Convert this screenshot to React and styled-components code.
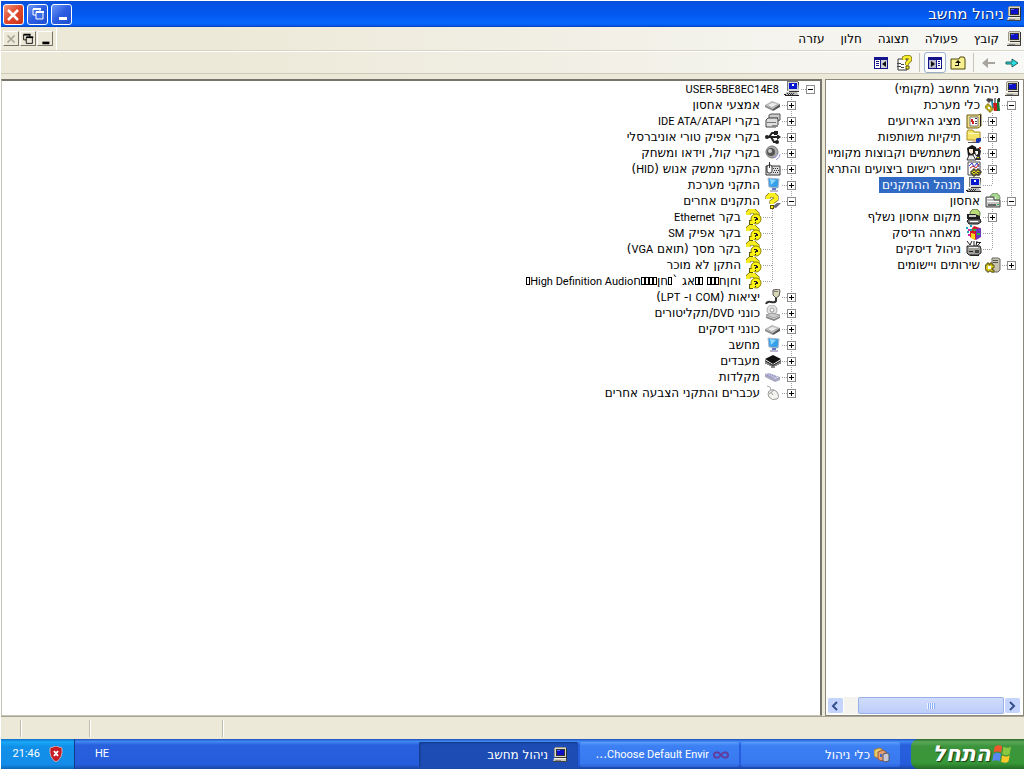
import React from 'react';
import styled, { createGlobalStyle, css } from 'styled-components';

const icons = {
  computer: (
    <>
      <path d="M3 0h11v10H3z" fill="#dcd8c8" />
      <path d="M3 0h11v1H3zM2 1h1v9H2z" fill="#9c9888" />
      <path d="M14 1h1v10H4v-1h10z" fill="#333" />
      <path d="M4 2h9v7H4z" fill="#333" />
      <path d="M5 3h7v5H5z" fill="#0c10c8" />
      <path d="M5 3h3v1H5z" fill="#5868ff" />
      <path d="M2 11h12l1 4H1z" fill="#d0ccbc" />
      <path d="M2 11h12v1H2z" fill="#f4f0e4" />
      <path d="M1 14h14v1H1zM14 11h1v3h-1z" fill="#444" />
      <path d="M3 13h6v1H3z" fill="#888" />
    </>
  ),
  devmgr: (
    <>
      <path d="M4 0h10v10H4z" fill="#d8d8d8" />
      <path d="M4 0h10v1H4zM3 0h1v10H3z" fill="#777" />
      <path d="M14 1h1v9H5v1h10z" fill="#333" />
      <path d="M5 2h8v6H5z" fill="#0818d0" />
      <path d="M8 3h2v2H8z" fill="#fff" />
      <path d="M2 11h11l2 4H1z" fill="#bbb" />
      <path d="M1 14h14v1H1zM0 13h2v1H0z" fill="#222" />
      <path d="M3 12h1v1H3zM5 12h1v1H5zM7 12h1v1H7zM9 12h1v1H9zM4 13h1v1H4zM6 13h1v1H6zM8 13h1v1H8z" fill="#333" />
    </>
  ),
  tools: (
    <>
      <path d="M1 3l2-2 5 1v3L6 4l-2 2z" fill="#444" />
      <path d="M6 4h2l1 7H7z" fill="#1890a8" />
      <path d="M9 1h2v6H9z" fill="#888" />
      <path d="M8 6h4l1 8H9z" fill="#cc1c1c" />
      <path d="M12 2h2l1 12h-3z" fill="#187838" />
      <path d="M13 1h2v4h-2z" fill="#333" />
      <path d="M0 9h2V7h2v2h2v2h2v2H6v2H4v-2H2v-2H0z" fill="#d8c820" stroke="#8a8010" strokeWidth="1" />
      <path d="M3 10h2v2H3z" fill="#fff" />
    </>
  ),
  events: (
    <>
      <path d="M1 2h11l3-1v12l-3 2H1z" fill="#f0e088" stroke="#6a5c10" strokeWidth="1" />
      <path d="M4 4h8v9H4z" fill="#fff" stroke="#777" strokeWidth="1" />
      <path d="M6 6h1v2h1v3H6V9H5V6z" fill="#cc2020" />
      <path d="M9 5h2v1H9zM9 8h2v1H9zM9 10h2v1H9z" fill="#445" />
      <path d="M14 2h1v11h-1z" fill="#222" />
    </>
  ),
  shared: (
    <>
      <path d="M1 3l1-2h5l1 2h6v8H1z" fill="#f4e468" stroke="#a89020" strokeWidth="1" />
      <path d="M2 4h11v1H2z" fill="#fffbc0" />
      <path d="M2 13h9v1H2z" fill="#555" />
      <path d="M11 9h4v3l-2 2h-3v-4z" fill="#1838b0" />
      <path d="M6 12l4-2v3H7z" fill="#e8b890" />
    </>
  ),
  users: (
    <>
      <path d="M1 3l5-3 4 2 1 5-4 3-5 1z" fill="#151515" />
      <path d="M3 4h4v4L5 9 3 7z" fill="#f8ecd8" />
      <path d="M9 4l4-1 2 3-1 5h-4L8 8z" fill="#222" />
      <path d="M9 6h3v3l-2 1z" fill="#fff" />
      <path d="M1 15l2-5h4l3 5z" fill="#e8e8e8" stroke="#333" strokeWidth="1" />
      <path d="M9 15l2-4h3l1 4z" fill="#333" />
      <path d="M11 12h2v1h-2z" fill="#e0d020" />
      <path d="M13 2h2v2h-2z" fill="#c04020" />
    </>
  ),
  perf: (
    <>
      <path d="M2 1h12v13H2z" fill="#fff" stroke="#444" strokeWidth="1" />
      <path d="M3 5l3-3 2 4 3-4 2 4" fill="none" stroke="#2838c8" strokeWidth="1" />
      <path d="M4 7l3-2 3 2 3-4" fill="none" stroke="#c82020" strokeWidth="1" />
      <path d="M5 10h2V8h2v2h2V8h2v2h2v2h-2v2h-2v-1H9v2H7v-2H5z" fill="#e0d020" stroke="#222" strokeWidth="1" />
      <path d="M7 11h2v1H7zM11 11h2v1h-2z" fill="#333" />
    </>
  ),
  storage: (
    <>
      <circle cx="10" cy="5" r="5" fill="#a8d890" stroke="#78906c" />
      <circle cx="10" cy="5" r="1" fill="#fff" />
      <path d="M1 4h8v3h6v7H1z" fill="#c4c4c4" stroke="#444" strokeWidth="1" />
      <path d="M2 5h6v1H2zM2 8h12v1H2z" fill="#fff" />
      <path d="M3 11h8v2H3z" fill="#666" />
      <path d="M12 11h2v1h-2z" fill="#18c030" />
    </>
  ),
  removable: (
    <>
      <circle cx="9" cy="5" r="5" fill="#b8dc78" stroke="#607838" />
      <path d="M1 5h8l5 2v3H1z" fill="#222" />
      <path d="M3 6h7v2H3z" fill="#ccc" />
      <path d="M3 10h11l1 3-3 2H3L1 12z" fill="#777" stroke="#111" strokeWidth="1" />
      <path d="M4 12h8v1H4z" fill="#fff" />
    </>
  ),
  defrag: (
    <>
      <path d="M8 1l6 2v9l-5 3-5-3V6z" fill="#d81828" />
      <path d="M10 4l5-1v9l-5 3z" fill="#6838c0" />
      <path d="M5 8l4 1v6l-4-2z" fill="#f0d820" />
      <path d="M0 2h2v2H0zM4 0h2v2H4zM1 6h2v2H1zM4 4h2v2H4z" fill="#18a8c0" />
      <path d="M2 4h2v2H2zM2 9h2v2H2z" fill="#d028a0" />
      <path d="M7 4h3v2H7zM11 8h3v2h-3z" fill="#28b840" />
    </>
  ),
  diskmgmt: (
    <>
      <path d="M1 0l3 4M6 0L4 4M8 0v5M11 0l-1 5M15 1l-4 4" stroke="#222" strokeWidth="1" />
      <path d="M10 1h4v1h-4z" fill="#222" />
      <path d="M1 5h13l1 3v4l-3 2H3L1 12z" fill="#a0a098" stroke="#222" strokeWidth="1" />
      <path d="M3 6h9v1H3z" fill="#eee" />
      <path d="M9 9h4v3H9z" fill="#444" />
      <path d="M3 10h4v1H3zM4 14h9v1H4z" fill="#222" />
    </>
  ),
  services: (
    <>
      <path d="M7 1h6l2 1v11l-2 2H7z" fill="#c8c4b0" stroke="#666" strokeWidth="1" />
      <path d="M8 3h5v1H8zM8 5h5v1H8z" fill="#555" />
      <path d="M0 8h2V6h2v2h1V6h2v2h2v3H7v2h2v2H6v-1H4v1H2v-2H0v-2h1z" fill="#e0d020" stroke="#5c5410" strokeWidth="1" />
      <path d="M3 9h3v3H3z" fill="#fff" />
    </>
  ),
  disk: (
    <>
      <path d="M0 8l7-4 8 3-7 5z" fill="#b8b8b8" />
      <path d="M3 8l4-2 5 1-5 3z" fill="#eee" />
      <path d="M0 8l8 4v2l-8-4z" fill="#888" />
      <path d="M8 12l7-5v3l-7 4z" fill="#555" />
    </>
  ),
  ide: (
    <>
      <path d="M4 2l2-1h9v6l-2 1H4z" fill="#ccc" stroke="#555" strokeWidth="1" />
      <path d="M1 7l2-2h9l1 1v6l-2 2H1z" fill="#ddd" stroke="#444" strokeWidth="1" />
      <path d="M2 9h9v1H2zM5 4h8v1H5z" fill="#777" />
      <path d="M7 12h6v2H7z" fill="#888" />
    </>
  ),
  usb: (
    <>
      <path d="M1 8h13M4 8l3-4h3M6 8l3 5h3" fill="none" stroke="#222" strokeWidth="2" />
      <path d="M16 8l-4-3v6zM9 2h4v4H9z" fill="#222" />
      <circle cx="2" cy="8" r="2" fill="#222" />
      <circle cx="12" cy="13" r="2" fill="#222" />
    </>
  ),
  sound: (
    <>
      <circle cx="7" cy="7" r="6" fill="#aaa" stroke="#777" />
      <circle cx="6" cy="7" r="4" fill="#555" />
      <circle cx="5" cy="6" r="2" fill="#ccc" />
      <path d="M11 15q4-2 4-6M9 13q3-1 3-4" fill="none" stroke="#9aa0e8" strokeWidth="1" />
    </>
  ),
  hid: (
    <>
      <path d="M1 5h14v9H1z" fill="#ddd" stroke="#333" strokeWidth="1" />
      <path d="M8 7h1v1H8zM10 7h1v1h-1zM12 7h1v1h-1zM9 9h1v1H9zM11 9h1v1h-1zM13 9h1v1h-1zM8 11h1v1H8zM10 11h1v1h-1zM12 11h1v1h-1z" fill="#333" />
      <rect x="2" y="4" width="5" height="8" rx="2" fill="#fff" stroke="#333" />
      <path d="M4 1h1v6H4z" fill="#333" />
    </>
  ),
  monitor: (
    <>
      <path d="M3 1l11 1-1 9-9-1z" fill="#38a0e8" stroke="#a8b8c8" strokeWidth="1" />
      <path d="M5 2l6 1-5 5z" fill="#90d8ff" />
      <path d="M7 11h4v2H7z" fill="#6878c0" />
      <path d="M5 13h8v2H5z" fill="#b8b8d0" />
    </>
  ),
  question: (
    <>
      <path d="M7 14l5-4h4l-5 5z" fill="#667" />
      <path d="M3 6V4l2-2h4l2 2v2L7 9v2" fill="none" stroke="#5c5400" strokeWidth="5" />
      <path d="M5 12h4v4H5z" fill="#5c5400" />
      <path d="M3 6V4l2-2h4l2 2v2L7 9v2" fill="none" stroke="#fcf020" strokeWidth="4" />
      <path d="M6 13h2v2H6z" fill="#fcf020" />
    </>
  ),
  unknown: (
    <>
      <path d="M2 6V4l2-2h4l3 3v3" fill="none" stroke="#5c5400" strokeWidth="5" />
      <path d="M3 11h4v5H3z" fill="#5c5400" />
      <path d="M2 6V4l2-2h4l3 3v3" fill="none" stroke="#f4ec20" strokeWidth="4" />
      <circle cx="10" cy="10" r="5" fill="#fcf410" stroke="#8c8400" />
      <path d="M4 12h4v3H4z" fill="#fcf410" />
      <path d="M8 8h3v1h1v2h-2v1H9v-2h1V9H8zM9 13h1v1H9z" fill="#222" />
    </>
  ),
  port: (
    <>
      <path d="M8 1l6-1 1 2-1 5-3 2-3-3z" fill="#d8d8b8" stroke="#555" strokeWidth="1" />
      <path d="M9 2h4v1H9z" fill="#777" />
      <path d="M11 9v3q-1 2-5 1t-5 2" fill="none" stroke="#333" strokeWidth="2" />
    </>
  ),
  cdrom: (
    <>
      <circle cx="7" cy="5" r="5" fill="#e4e4e4" stroke="#aaa" />
      <circle cx="7" cy="5" r="2" fill="#fff" stroke="#999" />
      <path d="M1 10l6-2 8 2-6 3z" fill="#ccc" stroke="#999" strokeWidth="1" />
      <path d="M1 11l8 3 6-3v2l-6 3-8-3z" fill="#888" />
    </>
  ),
  cpu: (
    <>
      <path d="M0 6l8-4 8 4-8 5z" fill="#111" />
      <path d="M0 7l8 5 8-5v1l-8 5-8-5z" fill="#333" />
      <path d="M1 8v3M3 9v3M5 10v3M7 11v4M9 11v4M11 10v3M13 9v3M15 8v3" stroke="#111" strokeWidth="1" />
    </>
  ),
  keyboard: (
    <>
      <path d="M0 5l3-1 12 4v3l-5 2L0 8z" fill="#a8a8c0" />
      <path d="M1 5l2-1 11 4-4 2z" fill="#d8d8f0" />
      <path d="M3 5l8 3M5 5l7 3M2 6l8 3" stroke="#8080b8" strokeWidth="1" strokeDasharray="1 1" />
    </>
  ),
  mouse: (
    <>
      <path d="M2 1q4 0 4 4" fill="none" stroke="#aaa" strokeWidth="1" />
      <path d="M4 6q4-3 8 1 3 5 0 7-5 2-8-2-2-3 0-6z" fill="#f4f4f0" stroke="#999" strokeWidth="1" />
      <path d="M4 9l5-4M6 7l2 3" stroke="#999" strokeWidth="1" />
    </>
  ),
  next: <path d="M2 7h6V4l6 4-6 4V9H2z" fill="#28e0e0" stroke="#186060" strokeWidth="1" />,
  prev: <path d="M14 7H7V3L1 8l6 5V9h7z" fill="#a8a49c" />,
  up: (
    <>
      <path d="M1 4h8l1-2h4l1 2v10H1z" fill="#f8f090" stroke="#4c4808" strokeWidth="1" />
      <path d="M8 5l3 3H9v3H5v-1h3V8H5z" fill="#111" />
    </>
  ),
  treePane: (
    <>
      <path d="M1 2h14v12H1z" fill="#14148c" />
      <path d="M2 5h7v8H2z" fill="#b8b8c8" />
      <path d="M10 5h4v8h-4z" fill="#fff" />
      <path d="M4 6l4 3-4 3z" fill="#111" />
      <path d="M11 6h2v1h-2zM11 8h2v1h-2zM11 10h2v1h-2z" fill="#14148c" />
    </>
  ),
  actionPane: (
    <>
      <path d="M1 2h14v12H1z" fill="#14148c" />
      <path d="M2 5h5v8H2z" fill="#fff" />
      <path d="M8 5h6v8H8z" fill="#d0d0d8" />
      <path d="M13 6L9 9l4 3z" fill="#111" />
      <path d="M3 6h3v1H3zM3 8h3v1H3zM3 10h3v1H3z" fill="#14148c" />
    </>
  ),
  help: (
    <>
      <path d="M2 4h9v11H2z" fill="#fff" stroke="#333" strokeWidth="1" />
      <path d="M1 8h4v1H1zM1 11h4v1H1zM5 9h3v1H5zM5 12h3v1H5z" fill="#444" />
      <path d="M8 5V3l2-1h3l1 1v2l-3 3v2" fill="none" stroke="#4c4400" strokeWidth="4" />
      <path d="M8 5V3l2-1h3l1 1v2l-3 3v2" fill="none" stroke="#f8ec30" strokeWidth="3" />
      <path d="M10 11h3v3h-3z" fill="#f8ec30" stroke="#5c5400" strokeWidth="1" />
    </>
  ),
  adminTools: (
    <>
      <path d="M0 3l5-2 3 1v7l-5 2-3-2z" fill="#e8c868" stroke="#a08040" strokeWidth="1" />
      <path d="M4 5l5-2 3 2v7l-5 2-3-2z" fill="#e8a070" stroke="#985838" strokeWidth="1" />
      <path d="M9 7l4-1 2 1v7l-4 1-2-1z" fill="#c8c8d4" stroke="#556" strokeWidth="1" />
      <path d="M6 7h2v3H6z" fill="#4868c8" />
    </>
  ),
  visualStudio: (
    <path
      d="M8 8C5 4 1 5 1 8s4 4 7 0 7-3 7 0-4 4-7 0z"
      fill="none"
      stroke="#643c9c"
      strokeWidth="2"
    />
  ),
  shield: (
    <>
      <path d="M8 0l6 2q1 10-6 14Q1 12 2 2z" fill="#c81c24" stroke="#c8a8b0" strokeWidth="1" />
      <path d="M6 5l4 5M10 5l-4 5" stroke="#fff" strokeWidth="2" />
    </>
  ),
  close: <path d="M4 4l8 8M12 4l-8 8" stroke="currentColor" strokeWidth="2" />,
  restore: (
    <>
      <path d="M3 3h7v6H3z" fill="none" stroke="currentColor" strokeWidth="1" />
      <path d="M3 2h8v2H3z" fill="currentColor" />
      <path d="M6 6h7v7H6z" fill="var(--face)" stroke="currentColor" strokeWidth="1" />
      <path d="M6 5h8v2H6z" fill="currentColor" />
    </>
  ),
  minimize: <path d="M5 11h8v3H5z" fill="currentColor" />,
  chevronLeft: <path d="M10 4L6 8l4 4" fill="none" stroke="#34508c" strokeWidth="2" />,
  chevronRight: <path d="M6 4l4 4-4 4" fill="none" stroke="#34508c" strokeWidth="2" />,
  flag: (
    <>
      <path d="M3 2q3-2 6 0L8 7Q5 5 2 7z" fill="#f0582c" />
      <path d="M10 2q3 2 6 0l-1 6q-3 2-6 0z" fill="#88c840" />
      <path d="M2 8q3-2 6 0l-1 6q-3-2-6 0z" fill="#5888f0" />
      <path d="M9 9q3 2 6 0l-1 5q-3 2-6 0z" fill="#fcc828" />
    </>
  ),
};

function Icon({ name, size = 16 }) {
  return (
    <svg width={size} height={size} viewBox="0 0 16 16" aria-hidden="true">
      {icons[name]}
    </svg>
  );
}

// Each string in `lines` is one 19px cell of the tree gutter:
// v = line passing through, t = branch, l = last branch, r = root, - = empty
const consoleTree = [
  { lines: [], icon: 'computer', label: 'ניהול מחשב (מקומי)' },
  { lines: ['t'], open: true, icon: 'tools', label: 'כלי מערכת' },
  { lines: ['v', 't'], open: false, icon: 'events', label: 'מציג האירועים' },
  { lines: ['v', 't'], open: false, icon: 'shared', label: 'תיקיות משותפות' },
  { lines: ['v', 't'], open: false, icon: 'users', label: 'משתמשים וקבוצות מקומיים' },
  { lines: ['v', 't'], open: false, icon: 'perf', label: 'יומני רישום ביצועים והתראות' },
  { lines: ['v', 'l'], icon: 'devmgr', label: 'מנהל ההתקנים', selected: true },
  { lines: ['t'], open: true, icon: 'storage', label: 'אחסון' },
  { lines: ['v', 't'], open: false, icon: 'removable', label: 'מקום אחסון נשלף' },
  { lines: ['v', 't'], icon: 'defrag', label: 'מאחה הדיסק' },
  { lines: ['v', 'l'], icon: 'diskmgmt', label: 'ניהול דיסקים' },
  { lines: ['l'], open: false, icon: 'services', label: 'שירותים ויישומים' },
];

const deviceTree = [
  { lines: ['r'], open: true, icon: 'devmgr', label: 'USER-5BE8EC14E8' },
  { lines: ['-', 't'], open: false, icon: 'disk', label: 'אמצעי אחסון' },
  { lines: ['-', 't'], open: false, icon: 'ide', label: 'בקרי IDE ATA/ATAPI' },
  { lines: ['-', 't'], open: false, icon: 'usb', label: 'בקרי אפיק טורי אוניברסלי' },
  { lines: ['-', 't'], open: false, icon: 'sound', label: 'בקרי קול, וידאו ומשחק' },
  { lines: ['-', 't'], open: false, icon: 'hid', label: 'התקני ממשק אנוש (HID)' },
  { lines: ['-', 't'], open: false, icon: 'monitor', label: 'התקני מערכת' },
  { lines: ['-', 't'], open: true, icon: 'question', label: 'התקנים אחרים' },
  { lines: ['-', 'v', 't'], icon: 'unknown', label: 'בקר Ethernet' },
  { lines: ['-', 'v', 't'], icon: 'unknown', label: 'בקר אפיק SM' },
  { lines: ['-', 'v', 't'], icon: 'unknown', label: 'בקר מסך (תואם VGA)' },
  { lines: ['-', 'v', 't'], icon: 'unknown', label: 'התקן לא מוכר' },
  { lines: ['-', 'v', 'l'], icon: 'unknown', label: 'וחןח□□□ □□אג `□חן□□□□חHigh Definition Audio□' },
  { lines: ['-', 't'], open: false, icon: 'port', label: 'יציאות (COM ו- LPT)' },
  { lines: ['-', 't'], open: false, icon: 'cdrom', label: 'כונני DVD/תקליטורים' },
  { lines: ['-', 't'], open: false, icon: 'disk', label: 'כונני דיסקים' },
  { lines: ['-', 't'], open: false, icon: 'monitor', label: 'מחשב' },
  { lines: ['-', 't'], open: false, icon: 'cpu', label: 'מעבדים' },
  { lines: ['-', 't'], open: false, icon: 'keyboard', label: 'מקלדות' },
  { lines: ['-', 'l'], open: false, icon: 'mouse', label: 'עכברים והתקני הצבעה אחרים' },
];

const menus = ['קובץ', 'פעולה', 'תצוגה', 'חלון', 'עזרה'];

// Latin runs are set smaller than the Hebrew around them, □ is a missing glyph
function MixedText({ children }) {
  return children.split(/(□|[A-Z][\w\-/ ]*\w)/).map((part, i) => {
    if (part === '□') return <MissingGlyph key={i} />;
    if (i % 2) return <Latin key={i}>{part}</Latin>;
    return part;
  });
}

function Tree({ rows, label }) {
  return (
    <TreeList role="tree" aria-label={label}>
      {rows.map((row, i) => (
        <TreeRow key={i} role="treeitem" aria-selected={!!row.selected}>
          {row.lines.map((line, j) => (
            <Gutter key={j} $line={line}>
              {row.open !== undefined && j === row.lines.length - 1 && (
                <Expander $open={row.open} aria-label={row.open ? 'כווץ' : 'הרחב'} />
              )}
            </Gutter>
          ))}
          <IconCell><Icon name={row.icon} /></IconCell>
          <Label $selected={row.selected}><MixedText>{row.label}</MixedText></Label>
        </TreeRow>
      ))}
    </TreeList>
  );
}

export default function App() {
  return (
    <>
      <GlobalStyle />
      <Desktop dir="rtl">
        <TitleBar>
          <Icon name="computer" />
          <Title>ניהול מחשב</Title>
          <CaptionButtons>
            <CaptionButton aria-label="מזער"><Icon name="minimize" /></CaptionButton>
            <CaptionButton aria-label="שחזר"><Icon name="restore" /></CaptionButton>
            <CaptionButton $danger aria-label="סגור"><Icon name="close" size={20} /></CaptionButton>
          </CaptionButtons>
        </TitleBar>

        <MenuBar>
          <Icon name="computer" />
          <Menus>
            {menus.map((name) => <MenuButton key={name}>{name}</MenuButton>)}
          </Menus>
          <ChildControls>
            <ChildButton aria-label="מזער חלון"><Icon name="minimize" size={14} /></ChildButton>
            <ChildButton aria-label="שחזר חלון"><Icon name="restore" size={14} /></ChildButton>
            <ChildButton disabled aria-label="סגור חלון"><Icon name="close" size={14} /></ChildButton>
          </ChildControls>
        </MenuBar>

        <Toolbar>
          <ToolButton aria-label="קדימה"><Icon name="next" /></ToolButton>
          <ToolButton aria-label="אחורה"><Icon name="prev" /></ToolButton>
          <Separator />
          <ToolButton aria-label="למעלה"><Icon name="up" /></ToolButton>
          <ToolButton $pressed aria-label="עץ המסוף"><Icon name="treePane" /></ToolButton>
          <Separator />
          <ToolButton aria-label="עזרה"><Icon name="help" /></ToolButton>
          <ToolButton aria-label="חלונית"><Icon name="actionPane" /></ToolButton>
        </Toolbar>

        <Workspace>
          <ConsolePane>
            <Tree rows={consoleTree} label="מסוף" />
            <ScrollBar>
              <ScrollButton aria-label="גלול ימינה"><Icon name="chevronRight" /></ScrollButton>
              <ScrollThumb><Grip /></ScrollThumb>
              <ScrollGap />
              <ScrollButton aria-label="גלול שמאלה"><Icon name="chevronLeft" /></ScrollButton>
            </ScrollBar>
          </ConsolePane>
          <DetailPane>
            <Tree rows={deviceTree} label="התקנים" />
          </DetailPane>
        </Workspace>

        <StatusBar>
          <StatusCell />
          <StatusCell $width={133} />
          <StatusCell $width={69} />
          <StatusCell $width={20} />
        </StatusBar>

        <Taskbar>
          <StartButton>
            <Icon name="flag" size={20} />
            התחל
          </StartButton>
          <Tasks>
            <Task><Icon name="adminTools" /><TaskText>כלי ניהול</TaskText></Task>
            <Task>
              <Icon name="visualStudio" />
              <TaskText><MixedText>Choose Default Envir...</MixedText></TaskText>
            </Task>
            <Task $active><Icon name="computer" /><TaskText>ניהול מחשב</TaskText></Task>
          </Tasks>
          <Language>HE</Language>
          <Tray>
            <Icon name="shield" />
            <Clock>21:46</Clock>
          </Tray>
        </Taskbar>
      </Desktop>
    </>
  );
}

const GlobalStyle = createGlobalStyle`
  * {
    box-sizing: border-box;
  }

  body {
    margin: 0;
    background: #fff;
    font: 12px/16px "DejaVu Sans", sans-serif;
    color: #000;
  }

  button {
    font: inherit;
    color: inherit;
    padding: 0;
    border: 0;
    background: none;
  }

  svg {
    display: block;
    flex: none;
  }
`;

const Desktop = styled.div`
  min-height: 100vh;
  display: flex;
  flex-direction: column;
  padding: 1px 2px 1px 1px;
`;

const Latin = styled.span`
  font-family: Roboto, sans-serif;
  font-size: 11px;
`;

const TitleBar = styled.header`
  display: flex;
  align-items: center;
  gap: 2px;
  height: 26px;
  padding: 0 2px;
  color: #fff;
  background: linear-gradient(#0a50d8, #0454e8 20%, #0358ee 50%, #0566fc 80%, #0560f4 92%, #0440b8);
`;

const Title = styled.h1`
  flex: 1;
  margin: 0;
  font-size: 15px;
  font-weight: normal;
  text-shadow: 1px 1px #0a2c80;
`;

const CaptionButtons = styled.div`
  display: flex;
  gap: 3px;
`;

const CaptionButton = styled.button`
  --face: #3a6ce8;
  display: grid;
  place-items: center;
  width: 21px;
  height: 21px;
  color: #fff;
  border: 1px solid #fff;
  border-radius: 3px;
  background: linear-gradient(135deg, #6c98f8, #2c5ce0 50%, #2050d0);

  ${(p) => p.$danger && css`
    background: linear-gradient(135deg, #f0987c, #e0482c 50%, #c83418);
  `}
`;

const MenuBar = styled.nav`
  display: flex;
  align-items: center;
  height: 24px;
  padding-right: 2px;
  background: linear-gradient(to left, #f8f8f6, #ece9d8 80%);
  border-bottom: 1px solid #d8d4c4;
`;

const Menus = styled.div`
  display: flex;
  flex: 1;
  gap: 16px;
  padding-right: 7px;
`;

const MenuButton = styled.button`
  white-space: nowrap;
`;

const ChildControls = styled.div`
  display: flex;
  align-self: stretch;
  align-items: center;
  gap: 1px;
  padding: 0 3px 0 2px;
  border-right: 1px solid #fff;
`;

const ChildButton = styled.button`
  --face: #ece9d8;
  display: grid;
  place-items: center;
  width: 16px;
  height: 15px;
  border: 1px solid;
  border-color: #fff #77746a #77746a #fff;

  &:disabled {
    color: #a8a498;
  }
`;

const Toolbar = styled.div`
  display: flex;
  align-items: center;
  gap: 1px;
  height: 22px;
  padding-right: 1px;
  background: linear-gradient(to left, #f8f8f6, #ece9d8 80%);
  border-top: 1px solid #fff;
`;

const ToolButton = styled.button`
  display: grid;
  place-items: center;
  width: 22px;
  height: 21px;

  ${(p) => p.$pressed && css`
    border: 1px solid #98b0cc;
    border-radius: 3px;
    background: #fff;
  `}
`;

const Separator = styled.span`
  width: 1px;
  height: 19px;
  margin: 0 3px;
  background: #c8c4b4;
`;

const Workspace = styled.main`
  flex: 1;
  display: flex;
  gap: 3px;
  padding-top: 5px;
  background: #ece9d8;
  border-top: 1px solid #cfcbbb;
`;

const ConsolePane = styled.section`
  display: flex;
  flex-direction: column;
  justify-content: space-between;
  width: 199px;
  padding: 1px 2px 1px 1px;
  overflow: hidden;
  background: #fff;
  border: 1px solid #8c887c;
`;

const DetailPane = styled.section`
  flex: 1;
  min-width: 0;
  background: #fff;
  border: 1px solid #c8c4b4;
  border-top: 2px solid #77746c;
  border-right: 2px solid #77746c;
`;

const TreeList = styled.div`
  overflow: hidden;
`;

const TreeRow = styled.div`
  display: flex;
  align-items: center;
  height: 16px;
  white-space: nowrap;
`;

const dotsDown = 'repeating-linear-gradient(#a0a0a0 0 1px, transparent 1px 2px)';
const dotsAcross = 'linear-gradient(to right, #a0a0a0 50%, transparent 50%)';

const Gutter = styled.span`
  flex: none;
  display: grid;
  place-items: center;
  width: 19px;
  height: 16px;

  ${(p) => p.$line === 'v' && css`
    background: ${dotsDown} 9px 0 / 1px 16px no-repeat;
  `}
  ${(p) => p.$line === 't' && css`
    background: ${dotsDown} 9px 0 / 1px 16px no-repeat, linear-gradient(#fff, #fff) right / 9px 16px no-repeat, ${dotsAcross} 0 8px / 2px 1px repeat-x;
  `}
  ${(p) => p.$line === 'l' && css`
    background: ${dotsDown} 9px 0 / 1px 8px no-repeat, linear-gradient(#fff, #fff) right / 9px 16px no-repeat, ${dotsAcross} 0 8px / 2px 1px repeat-x;
  `}
  ${(p) => p.$line === 'r' && css`
    background: linear-gradient(#fff, #fff) right / 9px 16px no-repeat, ${dotsAcross} 0 8px / 2px 1px repeat-x;
  `}
`;

const Expander = styled.button`
  width: 9px;
  height: 9px;
  border: 1px solid #8c8c8c;
  background: ${(p) => !p.$open && 'linear-gradient(#000, #000) center / 1px 5px no-repeat,'}
    linear-gradient(#000, #000) center / 5px 1px no-repeat, #fff;
`;

const IconCell = styled.span`
  flex: none;
  display: grid;
  place-items: center;
  width: 18px;
`;

const Label = styled.span`
  padding: 0 3px;
  margin-right: 1px;

  ${(p) => p.$selected && css`
    color: #fff;
    background: #316ac5;
  `}
`;

const MissingGlyph = styled.span`
  display: inline-block;
  width: 4px;
  height: 8px;
  border: 1px solid #000;
`;

const ScrollBar = styled.div`
  display: flex;
  height: 17px;
  background: #f4f3ee;
`;

const ScrollButton = styled.button`
  display: grid;
  place-items: center;
  width: 17px;
  border: 1px solid #fff;
  border-radius: 3px;
  background: #c4d4fc;
`;

const ScrollThumb = styled.div`
  flex: 1;
  display: grid;
  place-items: center;
  border: 1px solid #98b0e8;
  border-radius: 2px;
  background: linear-gradient(#d0dcfc, #bccdf8);
`;

const Grip = styled.span`
  width: 8px;
  height: 6px;
  background: repeating-linear-gradient(to right, #eef4fe 0 1px, #8cb0f8 1px 2px);
`;

const ScrollGap = styled.span`
  width: 14px;
`;

const StatusBar = styled.footer`
  display: flex;
  height: 23px;
  padding: 3px 0 2px;
  background: #ece9d8;
  border-top: 1px solid #a8a498;
`;

const StatusCell = styled.span`
  flex: ${(p) => (p.$width ? `0 0 ${p.$width}px` : 1)};
  border-left: 1px solid #fff;
  box-shadow: -1px 0 #c0bcac;

  &:last-child {
    border: 0;
    box-shadow: none;
  }
`;

const Taskbar = styled.div`
  display: flex;
  align-items: stretch;
  height: 30px;
  color: #fff;
  background: linear-gradient(#1c50b8, #4088f4 8%, #2860dc 20%, #245cdc 85%, #1c44a4);
`;

const StartButton = styled.button`
  display: flex;
  align-items: center;
  width: 113px;
  padding-right: 13px;
  font-size: 22px;
  font-style: italic;
  font-weight: bold;
  text-shadow: 1px 1px 1px #143c14;
  border-radius: 8px 0 0 8px;
  background: linear-gradient(#2c6c2c, #58a858 10%, #3c943c 25%, #389838 80%, #246c24);
`;

const Tasks = styled.div`
  flex: 1;
  display: flex;
  gap: 2px;
  padding: 3px 11px 2px 0;
`;

const Task = styled.button`
  display: flex;
  align-items: center;
  gap: 4px;
  width: 159px;
  padding: 0 10px;
  border-radius: 2px;
  background: linear-gradient(#5c9cfc, #3c80f4 15%, #3878f0 85%, #2c64d8);

  ${(p) => p.$active && css`
    background: #1c4cb4;
    box-shadow: inset 1px 1px 2px #123884;
  `}
`;

const TaskText = styled.span`
  overflow: hidden;
  white-space: nowrap;
`;

const Language = styled(Latin)`
  align-self: center;
  padding: 0 14px 0 20px;
`;

const Clock = styled(Latin)`
  padding-right: 8px;
`;

const Tray = styled.div`
  display: flex;
  align-items: center;
  width: 74px;
  padding-right: 10px;
  border-right: 1px solid #103c8c;
  background: linear-gradient(#1070c8, #18a8f8 10%, #1290e8 25%, #128ce8 85%, #0c68b8);
`;
